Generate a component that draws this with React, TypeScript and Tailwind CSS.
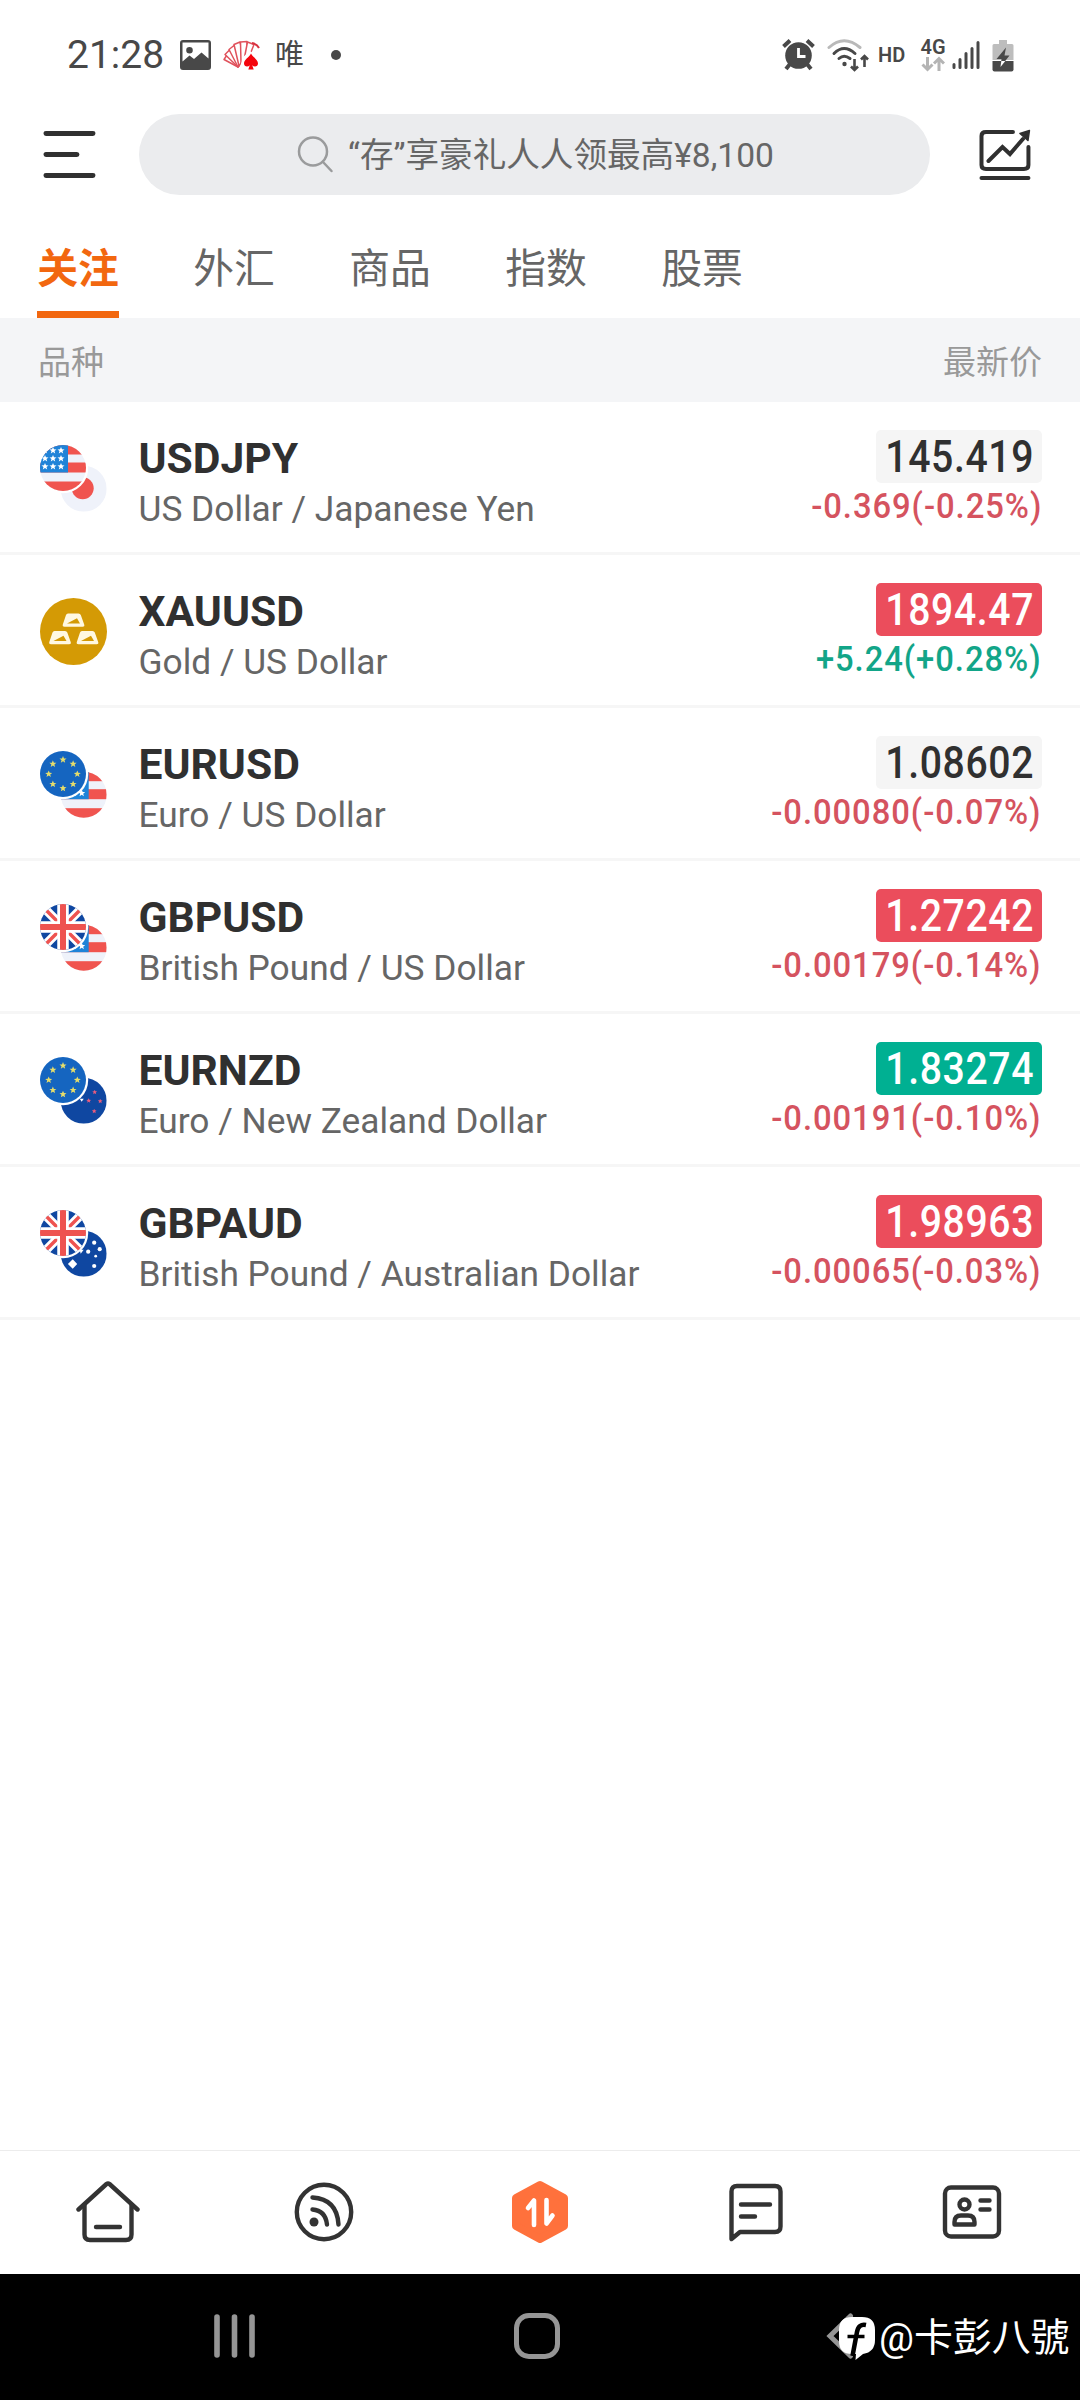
import { ReactNode, useState } from "react";

interface Quote {
  symbol: string;
  name: string;
  price: string;
  change: string;
  up: boolean;
  tone: "flat" | "red" | "green";
  icon: ReactNode;
}

const STAR = "M0-3.6 1-1.2 3.5-1.1 1.5.5 2.2 3 0 1.6-2.2 3-1.5.5-3.5-1.1-1-1.2Z";

// each flag is drawn inside a 46x46 box
function UsFlag() {
  return (
    <g>
      <rect width="46" height="46" fill="#eff2fa" />
      <rect width="46" height="9.5" fill="#f0544f" />
      <rect y="17.5" width="46" height="10" fill="#f0544f" />
      <rect y="36.5" width="46" height="10" fill="#f0544f" />
      <rect width="28" height="27.5" fill="#1f83d8" />
      {[5.5, 13.5, 21.5].map((y) =>
        [5, 13, 21].map((x) => <path key={`${x}-${y}`} d={STAR} transform={`translate(${x} ${y})`} fill="#fff" />)
      )}
    </g>
  );
}

function JpFlag() {
  return (
    <g>
      <rect width="46" height="46" fill="#eff2fa" />
      <circle cx="22" cy="22.5" r="11" fill="#f0544f" />
    </g>
  );
}

function EuFlag() {
  return (
    <g>
      <rect width="46" height="46" fill="#1565c0" />
      {[0, 45, 90, 135, 180, 225, 270, 315].map((a) => {
        const x = 23 + 14.3 * Math.sin((a * Math.PI) / 180);
        const y = 23 - 14.3 * Math.cos((a * Math.PI) / 180);
        return <path key={a} d={STAR} transform={`translate(${x} ${y})`} fill="#e6dd6b" />;
      })}
    </g>
  );
}

function UkFlag() {
  return (
    <g>
      <rect width="46" height="46" fill="#0f47a1" />
      <path d="M0 0 46 46M46 0 0 46" stroke="#fff" strokeWidth="9" />
      <path d="M0 0 46 46M46 0 0 46" stroke="#ee5350" strokeWidth="3.4" />
      <path d="M23 0V46M0 23H46" stroke="#fff" strokeWidth="11.5" />
      <path d="M23 0V46M0 23H46" stroke="#ee5350" strokeWidth="6" />
    </g>
  );
}

function NzFlag() {
  return (
    <g>
      <rect width="46" height="46" fill="#0f47a1" />
      <path d="M19 21h4l-2 3z" fill="#fff" />
      {[[34, 14.5], [28, 23], [39.5, 23.5], [33.5, 33.5]].map(([x, y]) => (
        <g key={x} transform={`translate(${x} ${y}) scale(.7)`}>
          <path d={STAR} fill="#ee5c7c" />
        </g>
      ))}
    </g>
  );
}

function AuFlag() {
  return (
    <g>
      <rect width="46" height="46" fill="#0f47a1" />
      <path d="M19 19h4l-3 4z" fill="#fff" />
      <path d="M12 28.5 16.5 33.3 12 38 7.2 33.3Z" fill="#fff" />
      {[[33.5, 12], [39, 18.5], [27.5, 21], [35, 25.5], [33.5, 35.3]].map(([x, y], i) => (
        <circle key={x + y} cx={x} cy={y} r={i === 3 ? 1.4 : 2.1} fill="#fff" />
      ))}
    </g>
  );
}

function PairIcon({ id, front, back }: { id: string; front: ReactNode; back: ReactNode }) {
  return (
    <svg width="67" height="67" viewBox="0 0 67 67">
      <defs>
        <clipPath id={id}><circle cx="23" cy="23" r="23" /></clipPath>
      </defs>
      <g transform="translate(20.7 20.7)"><g clipPath={`url(#${id})`}>{back}</g></g>
      <circle cx="23" cy="23" r="25.2" fill="#fff" />
      <g clipPath={`url(#${id})`}>{front}</g>
    </svg>
  );
}

function GoldIcon() {
  return (
    <svg width="67" height="67" viewBox="0 0 67 67">
      <circle cx="33.5" cy="33.5" r="33.5" fill="#d49a05" />
      {[[22.5, 15], [9, 32.5], [36.5, 32.5]].map(([x, y]) => (
        <g key={x} transform={`translate(${x} ${y})`}>
          <path d="M5.5.5H16q1.700 0 2.300 1.600l3.400 9.400q.7 2.200-1.600 2.200H2Q-.3 13.700.3 11.500L3.500 2Q4 .5 5.500.500Z" fill="#fff8e1" />
          <path d="M4.500 10.500 14.500 5.300 17.500 10.500Z" fill="#d49a05" />
        </g>
      ))}
    </svg>
  );
}

const quotes: Quote[] = [
  { symbol: "USDJPY", name: "US Dollar / Japanese Yen", price: "145.419", change: "-0.369(-0.25%)", up: false, tone: "flat", icon: <PairIcon id="usdjpy" front={<UsFlag />} back={<JpFlag />} /> },
  { symbol: "XAUUSD", name: "Gold / US Dollar", price: "1894.47", change: "+5.24(+0.28%)", up: true, tone: "red", icon: <GoldIcon /> },
  { symbol: "EURUSD", name: "Euro / US Dollar", price: "1.08602", change: "-0.00080(-0.07%)", up: false, tone: "flat", icon: <PairIcon id="eurusd" front={<EuFlag />} back={<UsFlag />} /> },
  { symbol: "GBPUSD", name: "British Pound / US Dollar", price: "1.27242", change: "-0.00179(-0.14%)", up: false, tone: "red", icon: <PairIcon id="gbpusd" front={<UkFlag />} back={<UsFlag />} /> },
  { symbol: "EURNZD", name: "Euro / New Zealand Dollar", price: "1.83274", change: "-0.00191(-0.10%)", up: false, tone: "green", icon: <PairIcon id="eurnzd" front={<EuFlag />} back={<NzFlag />} /> },
  { symbol: "GBPAUD", name: "British Pound / Australian Dollar", price: "1.98963", change: "-0.00065(-0.03%)", up: false, tone: "red", icon: <PairIcon id="gbpaud" front={<UkFlag />} back={<AuFlag />} /> },
];

const tones = {
  flat: "bg-[#f5f5f5] text-[#303030]",
  red: "bg-[#eb4d5c] text-white",
  green: "bg-[#00b092] text-white",
};

const tabs = ["关注", "外汇", "商品", "指数", "股票"];

function StatusBar() {
  return (
    <div className="flex h-[110px] items-center justify-between pl-[67px] pr-[66px] text-[#484848]">
      <div className="flex items-center">
        <span className="w-[113px] text-[39px] leading-none">21:28</span>
        <svg width="31" height="31" viewBox="0 0 31 31">
          <path fillRule="evenodd" d="M3 0H28a3 3 0 0 1 3 3V27a3 3 0 0 1-3 3H3a3 3 0 0 1-3-3V3a3 3 0 0 1 3-3ZM2.500 2.500V21.500L9.500 15.500 14 19 21.500 12.500 28.500 18.500V2.500ZM9.500 7a3.300 3.300 0 1 1 0 6.600 3.300 3.300 0 0 1 0-6.600Z" fill="#484848" />
        </svg>
        <svg width="38" height="32" viewBox="0 0 38 32" className="ml-3">
          <g fill="#fff" stroke="#e0525c" strokeWidth="1.500" strokeLinejoin="round">
            <path d="M15 28 1 20.500 4 16 17 23Z" />
            <path d="M15 28 2 15.500 6.500 11 18 23Z" />
            <path d="M15 28 6 10.500 11 6.500 19 22Z" />
            <path d="M16 27 11 5.500 17 3 21 20Z" />
            <path d="M18 24 17.500 3 24 2.500 24 19Z" />
            <path d="M21 21 24.500 3 31 5.500 26 18Z" />
          </g>
          <path d="M29 4Q34 5 36 9" stroke="#d9313f" strokeWidth="2" fill="none" />
          <path d="M16 31 20 18 27 12 38 20V32H20Z" fill="#fff" />
          <path d="M28 14.500c1.500 3.500 7 6 7 10 0 3.300-3.800 4-5.800 1.800l1.500 4.200h-5.400l1.500-4.200c-2 2.200-5.800 1.500-5.800-1.800 0-4 5.500-6.500 7-10Z" fill="#f4040c" />
        </svg>
        <span className="ml-[14px] text-[29px] leading-none">唯</span>
        <span className="ml-[27px] size-[10px] rounded-full bg-[#484848]" />
      </div>
      <div className="flex items-center">
        <svg width="33" height="32" viewBox="0 0 33 32">
          <path d="M1.500 7.500 8 1.500M31.500 7.500 25 1.500" stroke="#484848" strokeWidth="4" />
          <path d="M8 25 4 30M25 25 29 30" stroke="#484848" strokeWidth="4" />
          <circle cx="16.500" cy="16.500" r="13.300" fill="#484848" />
          <path d="M16.500 9V17.500H23.500" stroke="#fff" strokeWidth="2.800" fill="none" />
        </svg>
        <svg width="42" height="33" viewBox="0 0 42 33" className="ml-3" fill="none" strokeLinecap="round" strokeWidth="3">
          <path d="M2 8.500Q17-5 33 8.500" stroke="#b9b9b9" />
          <path d="M7 14.500Q17 4.500 28 14.500" stroke="#484848" />
          <path d="M12 19.500Q17 15 23 19.500" stroke="#484848" />
          <circle cx="17.500" cy="25" r="2.200" fill="#484848" stroke="none" />
          <path d="M27.500 20V30.500M24 27.500 27.500 31 31 27.500M37.500 28V17.500M34 20.500 37.500 17 41 20.500" stroke="#484848" strokeWidth="2.600" strokeLinecap="butt" />
        </svg>
        <span className="ml-[9px] w-[27px] text-[20px] font-semibold leading-none">HD</span>
        <div className="ml-[15px] flex w-[26px] flex-col items-center">
          <span className="text-[20px] font-semibold leading-[17px]">4G</span>
          <svg width="24" height="16" viewBox="0 0 24 16" fill="none" stroke="#b4b4b4" strokeWidth="3">
            <path d="M6.500 1V13M1.500 8.500 6.500 13.500 11.500 8.500M18 15V3M13 7.500 18 2.500 23 7.500" />
          </svg>
        </div>
        <svg width="28" height="30" viewBox="0 0 28 30" className="ml-[6px]" stroke="#484848" strokeWidth="3" strokeLinecap="round">
          <path d="M2 24.500V27.500M8 19.500V27.500M14 13.500V27.500M20 8.500V27.500M26 2.500V27.500" />
        </svg>
        <svg width="22" height="33" viewBox="0 0 22 33" className="ml-3">
          <path d="M7 1H15V5H20A1.500 1.500 0 0 1 21.500 6.500V21H.5V6.500A1.500 1.500 0 0 1 2 5H7Z" fill="#bdbdbd" />
          <path d="M.5 22H21.500V30.500A2 2 0 0 1 19.500 32.500H2.500A2 2 0 0 1 .5 30.500Z" fill="#484848" />
          <path d="M14 8.500 4.500 20H9.500L8.500 28 17.500 16.500H12.500Z" fill="#484848" />
          <path d="M9.300 22H13.300L8.500 28Z" fill="#fff" />
        </svg>
      </div>
    </div>
  );
}

function Header() {
  return (
    <div className="flex h-[89px] items-center pl-[43px] pr-[49px]">
      <svg width="53" height="47" viewBox="0 0 53 47" stroke="#303030" strokeWidth="5" strokeLinecap="round">
        <path d="M3 2.500H50M3 23.500H34M3 44.500H50" />
      </svg>
      <div className="ml-[43px] flex h-[81px] w-[792px] items-center justify-center rounded-full bg-[#ebecee] pl-[2px]">
        <svg width="37" height="37" viewBox="0 0 37 37" fill="none" stroke="#9a9b9c" strokeWidth="2.500" strokeLinecap="round">
          <circle cx="16" cy="15.500" r="14" />
          <path d="M26 26 34.500 35" />
        </svg>
        <span className="ml-[14px] whitespace-nowrap pt-[4px] text-[33.600px] text-[#666]">“存”享豪礼人人领最高¥8,100</span>
      </div>
      <svg width="52" height="52" viewBox="0 0 52 52" className="ml-[49px]" fill="none" stroke="#303030" strokeWidth="4" strokeLinecap="round" strokeLinejoin="round">
        <path d="M34 3H7Q2.500 3 2.500 7V36Q2.500 40 7 40H45Q49.500 40 49.500 36V18" />
        <path d="M9.500 32 23.500 18 31 25 44 10" strokeLinejoin="miter" />
        <path d="M50.500 1.500 41 4.500 49 11.500Z" fill="#303030" strokeWidth="1.500" />
        <path d="M2.500 49H49.500" />
      </svg>
    </div>
  );
}

function QuoteRow({ quote }: { quote: Quote }) {
  return (
    <div className="flex h-[153px] items-start border-b-[3px] border-[#f6f6f6] pl-[39.500px] pr-[38px]">
      <div className="mt-[43px] w-[67px]">{quote.icon}</div>
      <div className="ml-[32px] mt-[31px] flex-1">
        <div className="text-[42.600px] font-bold leading-[50px] text-[#303030]">{quote.symbol}</div>
        <div className="mt-[5px] whitespace-nowrap text-[35.300px] leading-[42px] text-[#666]">{quote.name}</div>
      </div>
      <div className="flex flex-col items-end pt-[28px]">
        <div className={`flex h-[53px] w-[166px] items-center justify-center rounded-[5px] pl-[2px] pt-[3px] text-[43.500px] font-medium tracking-[0.7px] ${tones[quote.tone]}`}>
          <span className="scale-x-90">{quote.price}</span>
        </div>
        <div className={`mt-[2px] origin-right scale-x-95 text-[34.500px] font-medium leading-[42px] tracking-[1px] ${quote.up ? "text-[#12a588]" : "text-[#d5535f]"}`}>
          {quote.change}
        </div>
      </div>
    </div>
  );
}

function BottomNav() {
  return (
    <div className="grid h-[124px] grid-cols-5 place-items-center border-t border-[#ececec] pb-[2px]">
      <svg width="64" height="64" viewBox="0 0 64 64" fill="none" stroke="#333" strokeWidth="4.400" strokeLinecap="round" strokeLinejoin="round">
        <path d="M2.500 29.500 30.500 4Q32 2.800 33.500 4L61.500 29.500" />
        <path d="M8.500 25V54.500Q8.500 60 14 60H50Q55.500 60 55.500 54.500V25" />
        <path d="M20 47H44" />
      </svg>
      <svg width="60" height="60" viewBox="0 0 60 60" fill="none" stroke="#333" strokeWidth="4.400" strokeLinecap="round">
        <circle cx="30" cy="30" r="27.200" />
        <path d="M18.500 15.500Q43 17 44.500 42.500M18.500 27.500Q31.500 28.500 33 42.500" />
        <circle cx="20" cy="40" r="4.500" fill="#333" stroke="none" />
      </svg>
      <svg width="58" height="64" viewBox="0 0 58 64" fill="none" strokeLinejoin="round">
        <path d="M29 5 53 18V46L29 59 5 46V18Z" fill="#ff713c" stroke="#ff713c" strokeWidth="8" />
        <path d="M17 28 23 20.500V45M41.500 35.500 35.500 43.500V20" stroke="#fff" strokeWidth="4.600" strokeLinecap="round" />
      </svg>
      <svg width="54" height="60" viewBox="0 0 54 60" fill="none" stroke="#333" strokeWidth="4.400" strokeLinecap="round" strokeLinejoin="round">
        <path d="M2.500 57V9.500Q2.500 4 8 4H46Q51.500 4 51.500 9.500V44.500Q51.500 50 46 50H11Z" />
        <path d="M12 22.500H41M12 34.500H26" />
      </svg>
      <svg width="60" height="54" viewBox="0 0 60 54" fill="none" stroke="#333" strokeWidth="4.400" strokeLinecap="round" strokeLinejoin="round">
        <rect x="3" y="2.500" width="54" height="49" rx="6" />
        <circle cx="22.500" cy="19.500" r="5" />
        <path d="M12.500 39.500V37Q12.500 30.500 19 30.500H26Q32.500 30.500 32.500 37V39.500Z" />
        <path d="M38.500 15.500H47.500M38.500 24.500H47.500" />
      </svg>
    </div>
  );
}

function SystemBar() {
  return (
    <div className="relative h-[126px] bg-black">
      <div className="flex h-full items-center pb-[2px] pl-[214px]">
        <svg width="42" height="44" viewBox="0 0 42 44" stroke="#959595" strokeWidth="5.600" strokeLinecap="round">
          <path d="M3 3V41M20.500 3V41M38 3V41" />
        </svg>
        <div className="ml-[258px] h-[46px] w-[46px] rounded-[15px] border-[5.500px] border-[#959595]" />
        <svg width="28" height="46" viewBox="0 0 28 46" className="ml-[266px]" fill="none" stroke="#959595" strokeWidth="5" strokeLinecap="round">
          <path d="M24.500 3 4 23 24.500 43" />
        </svg>
      </div>
      <div className="absolute left-[838px] top-[40px] flex h-[48px] items-center text-white">
        <svg width="38" height="44" viewBox="0 0 38 44">
          <path d="M14 1H24Q37 1 37 14V24Q37 36 25 38L17.500 44 18 38H14Q1 38 1 25V14Q1 1 14 1Z" fill="#fff" />
          <path d="M28 9Q20.500 7.500 19 16L14.500 40" stroke="#000" strokeWidth="4.500" fill="none" />
          <path d="M9.500 20.500H26.500" stroke="#000" strokeWidth="3.500" />
        </svg>
        <span className="ml-[3px] whitespace-nowrap text-[38.900px] leading-none">@卡彭八號</span>
      </div>
    </div>
  );
}

export default function App() {
  const [active, setActive] = useState("关注");

  return (
    <div className="flex h-[2400px] w-[1080px] flex-col overflow-hidden bg-white font-[Roboto,'Noto_Sans_CJK_SC',sans-serif]">
      <StatusBar />
      <Header />
      <div className="flex h-[119px] gap-[74px] pl-[37px]">
        {tabs.map((tab) => (
          <button
            key={tab}
            onClick={() => setActive(tab)}
            className={`flex w-[82px] items-center justify-center whitespace-nowrap border-b-[7px] pt-[29px] text-[40.800px] leading-none ${tab === active ? "border-[#f2670f] font-bold text-[#f2670f]" : "border-transparent text-[#666]"}`}
          >
            {tab}
          </button>
        ))}
      </div>
      <div className="flex h-[84px] items-center justify-between bg-[#f4f5f7] px-[38px] pt-[6px] text-[33px] text-[#999]">
        <span>品种</span>
        <span>最新价</span>
      </div>
      <div className="flex-1">
        {quotes.map((q) => <QuoteRow key={q.symbol} quote={q} />)}
      </div>
      <BottomNav />
      <SystemBar />
    </div>
  );
}
